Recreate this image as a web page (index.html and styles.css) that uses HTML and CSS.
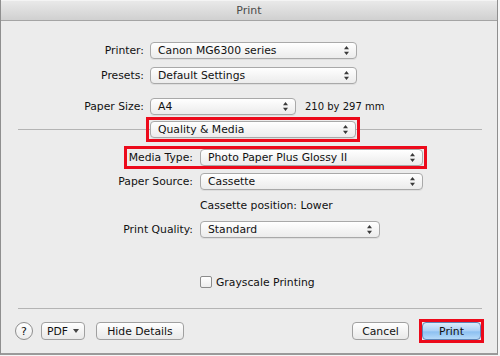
FILE: index.html
```html
<!DOCTYPE html>
<html>
<head>
<meta charset="utf-8">
<link rel="stylesheet" href="styles.css">
</head>
<body>
<div class="window">
  <div class="titlebar">Print</div>
  <div class="content">
    <div class="row top r-printer">
      <span class="label">Printer:</span>
      <div class="popup w-207"><span>Canon MG6300 series</span><svg class="arr" width="5" height="9" viewBox="0 0 5 9"><path d="M2.5 0L5 3.2H0Z M2.5 9L5 5.8H0Z" fill="#3a3a3a"/></svg></div>
    </div>
    <div class="row top r-presets">
      <span class="label">Presets:</span>
      <div class="popup w-207"><span>Default Settings</span><svg class="arr" width="5" height="9" viewBox="0 0 5 9"><path d="M2.5 0L5 3.2H0Z M2.5 9L5 5.8H0Z" fill="#3a3a3a"/></svg></div>
    </div>
    <div class="row top r-paper">
      <span class="label">Paper Size:</span>
      <div class="popup w-146"><span>A4</span><svg class="arr" width="5" height="9" viewBox="0 0 5 9"><path d="M2.5 0L5 3.2H0Z M2.5 9L5 5.8H0Z" fill="#3a3a3a"/></svg></div>
      <span class="dims">210 by 297 mm</span>
    </div>
    <div class="row r-section">
      <div class="hlbox">
        <div class="popup w-206"><span>Quality &amp; Media</span><svg class="arr" width="5" height="9" viewBox="0 0 5 9"><path d="M2.5 0L5 3.2H0Z M2.5 9L5 5.8H0Z" fill="#3a3a3a"/></svg></div>
      </div>
    </div>
    <div class="row r-media">
      <div class="hlgroup">
        <span class="label mlabel">Media Type:</span>
        <div class="popup w-223"><span>Photo Paper Plus Glossy II</span><svg class="arr" width="5" height="9" viewBox="0 0 5 9"><path d="M2.5 0L5 3.2H0Z M2.5 9L5 5.8H0Z" fill="#3a3a3a"/></svg></div>
      </div>
    </div>
    <div class="row low r-source">
      <span class="label">Paper Source:</span>
      <div class="popup w-223"><span>Cassette</span><svg class="arr" width="5" height="9" viewBox="0 0 5 9"><path d="M2.5 0L5 3.2H0Z M2.5 9L5 5.8H0Z" fill="#3a3a3a"/></svg></div>
    </div>
    <div class="row low r-cassette">
      <span class="label"></span>
      <span class="info">Cassette position: Lower</span>
    </div>
    <div class="row low r-quality">
      <span class="label">Print Quality:</span>
      <div class="popup w-180"><span>Standard</span><svg class="arr" width="5" height="9" viewBox="0 0 5 9"><path d="M2.5 0L5 3.2H0Z M2.5 9L5 5.8H0Z" fill="#3a3a3a"/></svg></div>
    </div>
    <div class="row r-gray">
      <span class="checkbox"></span>
      <span class="cblabel">Grayscale Printing</span>
    </div>
    <div class="sep"></div>
    <div class="row r-buttons">
      <span class="help">?</span>
      <span class="btn pdf">PDF <svg width="6" height="4" viewBox="0 0 6 4"><path d="M0 0H6L3 4Z" fill="#444"/></svg></span>
      <span class="btn hide">Hide Details</span>
      <span class="spacer"></span>
      <span class="btn cancel">Cancel</span>
      <span class="printbox"><span class="btn print">Print</span></span>
    </div>
  </div>
</div>
</body>
</html>
```

FILE: styles.css
```css
html, body {
  margin: 0;
  padding: 0;
  background: #f6f6f6;
}
body {
  font-family: "DejaVu Sans", "Liberation Sans", sans-serif;
  font-size: 10.8px;
  color: #111;
}
.window {
  box-sizing: border-box;
  width: 498px;
  height: 355px;
  border: 1px solid #8f8f8f;
  border-bottom: 2px solid #9a9a9a;
  background: #ececec;
  display: flex;
  flex-direction: column;
}
.titlebar {
  height: 19px;
  line-height: 19px;
  text-align: center;
  font-size: 11px;
  color: #4a4a4a;
  background: linear-gradient(#e9e9e9, #d0d0d0);
  border-bottom: 1px solid #a4a4a4;
  border-top: 1px solid #f4f4f4;
  margin-top: -1px;
}
.content {
  display: flex;
  flex-direction: column;
}
.row {
  display: flex;
  align-items: center;
  height: 17px;
}
.label {
  text-align: right;
  white-space: nowrap;
}
.top .label { width: 143px; margin-right: 6px; }
.low .label { width: 192px; margin-right: 7px; }
.r-printer { margin-top: 21px; }
.r-presets { margin-top: 8px; }
.r-paper { margin-top: 14px; }
.r-section {
  margin-top: 6px;
  margin-left: 17px;
  width: 464px;
  padding-left: 132px;
  box-sizing: border-box;
  background: linear-gradient(#b4b4b4, #b4b4b4) no-repeat 0 8px / 100% 1px;
}
.r-media { margin-top: 11px; padding-left: 126px; }
.r-source { margin-top: 7px; }
.r-cassette { margin-top: 7px; }
.r-quality { margin-top: 7px; }
.r-gray { margin-top: 37px; padding-left: 199px; height: 14px; }
.popup {
  box-sizing: border-box;
  height: 17px;
  display: flex;
  align-items: center;
  justify-content: space-between;
  padding: 0 7px 0 7px;
  border: 1px solid #a9a9a9;
  border-radius: 4px;
  background: linear-gradient(#ffffff, #f3f3f3 60%, #ececec);
  box-shadow: 0 1px 0 rgba(0,0,0,0.06);
  white-space: nowrap;
}
.arr { flex: none; }
.w-207 { width: 207px; }
.w-206 { width: 206px; }
.w-146 { width: 146px; }
.w-223 { width: 223px; }
.w-180 { width: 180px; }
.dims {
  margin-left: 9px;
  font-size: 10px;
}
.hlbox {
  display: flex;
  outline: 3px solid #ec0a1b;
  outline-offset: 1px;
}
.hlgroup {
  display: flex;
  align-items: center;
  padding-right: 1px;
  outline: 3px solid #ec0a1b;
  outline-offset: 0;
}
.mlabel { width: 66px; margin-right: 7px; }
.info { white-space: nowrap; }
.checkbox {
  box-sizing: border-box;
  width: 12px;
  height: 12px;
  border: 1px solid #8c8c8c;
  border-radius: 2px;
  background: linear-gradient(#ffffff, #ededed);
  margin-right: 4px;
}
.cblabel { white-space: nowrap; }
.sep {
  margin: 19px 0 0 17px;
  width: 464px;
  height: 1px;
  background: #b4b4b4;
}
.r-buttons {
  margin-top: 13px;
  padding: 0 16px 0 14px;
  height: 18px;
}
.help {
  box-sizing: border-box;
  width: 18px;
  height: 18px;
  border-radius: 50%;
  border: 1px solid #8e8e8e;
  background: linear-gradient(#ffffff, #ececec);
  display: flex;
  align-items: center;
  justify-content: center;
  font-size: 11px;
  margin-right: 8px;
}
.btn {
  box-sizing: border-box;
  height: 18px;
  display: flex;
  align-items: center;
  justify-content: center;
  border: 1px solid #a0a0a0;
  border-radius: 4px;
  background: linear-gradient(#ffffff, #f1f1f1 60%, #e9e9e9);
  white-space: nowrap;
}
.pdf { width: 44px; gap: 5px; }
.hide { width: 88px; margin-left: 11px; }
.spacer { flex: 1; }
.cancel { width: 57px; }
.printbox {
  display: flex;
  margin-left: 13px;
  outline: 3px solid #ec0a1b;
  outline-offset: 0;
}
.print {
  width: 59px;
  border-color: #5e84b5;
  background: linear-gradient(#dcecfb, #a9d0f6 50%, #8cc0f1 55%, #b6daf9);
}
```
